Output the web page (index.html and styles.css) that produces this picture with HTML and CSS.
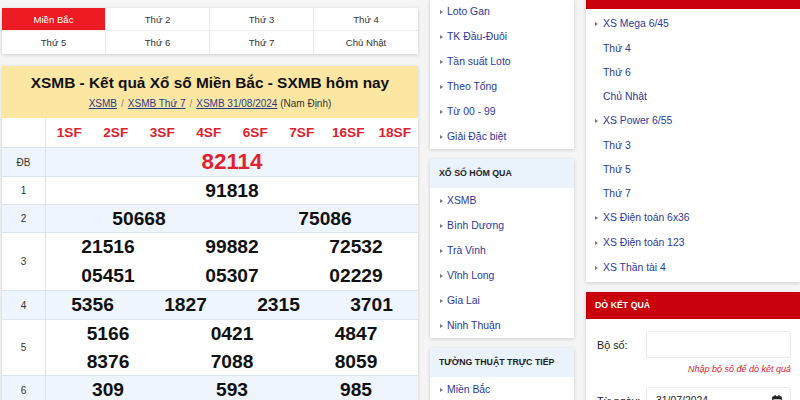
FILE: index.html
```html
<!DOCTYPE html>
<html lang="vi">
<head>
<meta charset="utf-8">
<title>XSMB</title>
<link rel="stylesheet" href="styles.css">
</head>
<body>
<div class="page">
  <div class="col-main">
    <div class="card tabs">
      <div class="tab active">Miền Bắc</div>
      <div class="tab">Thứ 2</div>
      <div class="tab">Thứ 3</div>
      <div class="tab">Thứ 4</div>
      <div class="tab last">Thứ 5</div>
      <div class="tab last">Thứ 6</div>
      <div class="tab last">Thứ 7</div>
      <div class="tab last">Chủ Nhật</div>
    </div>

    <div class="card result">
      <div class="result-head">
        <h1>XSMB - Kết quả Xổ số Miền Bắc - SXMB hôm nay</h1>
        <div class="crumbs"><a href="#">XSMB</a><span class="sep">/</span><a href="#">XSMB Thứ 7</a><span class="sep">/</span><a href="#">XSMB 31/08/2024</a> (Nam Định)</div>
      </div>
      <div class="row hrow">
        <div class="lbl"></div>
        <div class="vals c8">
          <div class="hd">1SF</div><div class="hd">2SF</div><div class="hd">3SF</div><div class="hd">4SF</div>
          <div class="hd">6SF</div><div class="hd">7SF</div><div class="hd">16SF</div><div class="hd">18SF</div>
        </div>
      </div>
      <div class="row alt l28">
        <div class="lbl">ĐB</div>
        <div class="vals c1"><div class="n db">82114</div></div>
      </div>
      <div class="row l27">
        <div class="lbl">1</div>
        <div class="vals c1"><div class="n">91818</div></div>
      </div>
      <div class="row alt l27">
        <div class="lbl">2</div>
        <div class="vals c2"><div class="n">50668</div><div class="n">75086</div></div>
      </div>
      <div class="row l285">
        <div class="lbl">3</div>
        <div class="vals c3">
          <div class="n">21516</div><div class="n">99882</div><div class="n">72532</div>
          <div class="n">05451</div><div class="n">05307</div><div class="n">02229</div>
        </div>
      </div>
      <div class="row alt l28">
        <div class="lbl">4</div>
        <div class="vals c4"><div class="n">5356</div><div class="n">1827</div><div class="n">2315</div><div class="n">3701</div></div>
      </div>
      <div class="row l275">
        <div class="lbl">5</div>
        <div class="vals c3">
          <div class="n">5166</div><div class="n">0421</div><div class="n">4847</div>
          <div class="n">8376</div><div class="n">7088</div><div class="n">8059</div>
        </div>
      </div>
      <div class="row alt l28">
        <div class="lbl">6</div>
        <div class="vals c3"><div class="n">309</div><div class="n">593</div><div class="n">985</div></div>
      </div>
    </div>
  </div>

  <div class="col-mid">
    <div class="card">
      <ul class="side-list">
        <li>Loto Gan</li>
        <li>TK Đầu-Đuôi</li>
        <li>Tần suất Loto</li>
        <li>Theo Tổng</li>
        <li>Từ 00 - 99</li>
        <li>Giải Đặc biệt</li>
      </ul>
    </div>
    <div class="card">
      <div class="mid-head">XỔ SỐ HÔM QUA</div>
      <ul class="side-list">
        <li>XSMB</li>
        <li>Bình Dương</li>
        <li>Trà Vinh</li>
        <li>Vĩnh Long</li>
        <li>Gia Lai</li>
        <li>Ninh Thuận</li>
      </ul>
    </div>
    <div class="card">
      <div class="mid-head">TƯỜNG THUẬT TRỰC TIẾP</div>
      <ul class="side-list">
        <li>Miền Bắc</li>
        <li>Miền Trung</li>
      </ul>
    </div>
  </div>

  <div class="col-right">
    <div class="card">
      <div class="red-head top">XỔ SỐ VIETLOTT</div>
      <ul class="r-list">
        <li class="grp">XS Mega 6/45</li>
        <li class="sub">Thứ 4</li>
        <li class="sub">Thứ 6</li>
        <li class="sub">Chủ Nhật</li>
        <li class="grp">XS Power 6/55</li>
        <li class="sub">Thứ 3</li>
        <li class="sub">Thứ 5</li>
        <li class="sub">Thứ 7</li>
        <li class="grp">XS Điện toán 6x36</li>
        <li class="grp">XS Điện toán 123</li>
        <li class="grp">XS Thần tài 4</li>
      </ul>
    </div>
    <div class="card">
      <div class="red-head">DÒ KẾT QUẢ</div>
      <div class="form">
        <div class="frow">
          <label class="flabel">Bộ số:</label>
          <div class="finput"></div>
        </div>
        <div class="hint">Nhập bộ số để dò kết quả</div>
        <div class="frow">
          <label class="flabel">Từ ngày:</label>
          <div class="finput date">
            <span>31/07/2024</span>
            <svg class="cal" width="10" height="11" viewBox="0 0 10 11"><rect x="0.75" y="1.75" width="8.5" height="8.5" rx="1" fill="none" stroke="#222" stroke-width="1.2"/><rect x="0.75" y="1.75" width="8.5" height="2.5" fill="#222"/><rect x="2.5" y="0" width="1.2" height="2.5" fill="#222"/><rect x="6.3" y="0" width="1.2" height="2.5" fill="#222"/></svg>
          </div>
        </div>
      </div>
    </div>
  </div>
</div>
</body>
</html>
```

FILE: styles.css
```css
* { box-sizing: border-box; }
html, body { margin: 0; padding: 0; }
body {
  width: 800px;
  height: 400px;
  overflow: hidden;
  background: #f5f5f5;
  font-family: "Liberation Sans", Arial, sans-serif;
}
.page {
  display: flex;
  align-items: flex-start;
  gap: 12px;
  padding-left: 2px;
  width: 820px;
}
.card {
  background: #fff;
  box-shadow: 0 1px 4px rgba(0, 0, 0, 0.16);
}

/* main column */
.col-main { width: 416px; flex: none; }
.tabs {
  margin-top: 8px;
  display: grid;
  grid-template-columns: repeat(4, 1fr);
}
.tab {
  height: 23px;
  line-height: 23px;
  text-align: center;
  font-size: 9.6px;
  color: #333;
  border-right: 1px solid #ececec;
  border-bottom: 1px solid #ececec;
}
.tab:nth-child(4n) { border-right: none; }
.tab.last { border-bottom: none; }
.tab.active { background: #ed1c24; color: #fff; }

.result { margin-top: 12px; }
.result-head {
  background: #fce7a2;
  height: 52px;
  padding-top: 6px;
  text-align: center;
}
.result-head h1 {
  margin: 0;
  font-size: 15.4px;
  line-height: 22px;
  font-weight: bold;
  color: #111;
}
.crumbs {
  font-size: 10px;
  line-height: 20px;
  color: #333;
}
.crumbs a { color: #2a3a8c; text-decoration: underline; }
.crumbs .sep { color: #888; margin: 0 4px; }

.row {
  display: flex;
  border-bottom: 1px solid #dde6f0;
}
.row.alt { background: #eef5fc; }
.lbl {
  width: 44px;
  flex: none;
  border-right: 1px solid #dde6f0;
  display: flex;
  align-items: center;
  justify-content: center;
  font-size: 10px;
  color: #333;
}
.vals { flex: 1; display: grid; }
.c1 { grid-template-columns: 1fr; }
.c2 { grid-template-columns: repeat(2, 1fr); }
.c3 { grid-template-columns: repeat(3, 1fr); }
.c4 { grid-template-columns: repeat(4, 1fr); }
.c8 { grid-template-columns: repeat(8, 1fr); }
.hd {
  text-align: center;
  color: #e0202a;
  font-size: 13.6px;
  font-weight: bold;
  line-height: 29px;
}
.n {
  text-align: center;
  font-size: 19.2px;
  font-weight: bold;
  color: #111;
}
.n.db { color: #e3212b; font-size: 22.4px; }
.l27 .n { line-height: 27px; }
.l275 .n { line-height: 27.5px; }
.l28 .n { line-height: 28px; }
.l285 .n { line-height: 28.5px; }

/* middle column */
.col-mid {
  width: 144px;
  flex: none;
  display: flex;
  flex-direction: column;
  gap: 10px;
  margin-top: -1px;
}
.side-list { list-style: none; margin: 0; padding: 0; }
.side-list li {
  height: 25px;
  display: flex;
  align-items: center;
  padding-left: 10px;
  font-size: 10.4px;
  color: #2a3a9c;
}
.side-list li::before,
.r-list li.grp::before {
  content: "";
  width: 0;
  height: 0;
  border-left: 3px solid #777;
  border-top: 2.5px solid transparent;
  border-bottom: 2.5px solid transparent;
  margin-right: 4px;
}
.mid-head {
  background: #eaf3fc;
  height: 29px;
  line-height: 29px;
  padding-left: 9px;
  font-size: 8.8px;
  font-weight: bold;
  color: #222;
}

/* right column */
.col-right {
  width: 214px;
  flex: none;
  display: flex;
  flex-direction: column;
  gap: 10px;
  margin-top: -18px;
}
.red-head {
  background: #c9000b;
  color: #fff;
  height: 27px;
  line-height: 27px;
  padding-left: 9px;
  font-size: 8.8px;
  font-weight: bold;
}
.red-head.top { line-height: 20px; }
.r-list { list-style: none; margin: 0; padding: 2px 0 2px; }
.r-list li {
  display: flex;
  align-items: center;
  font-size: 10.4px;
  color: #2a3a9c;
}
.r-list li.grp { height: 25px; padding-left: 9px; }
.r-list li.grp::before { margin-right: 5px; }
.r-list li.sub { height: 24px; padding-left: 17px; }

.form { padding: 12px 9px 12px 11px; }
.frow {
  display: grid;
  grid-template-columns: 49px 1fr;
  align-items: center;
}
.flabel { font-size: 10.8px; color: #222; }
.finput {
  height: 27px;
  border: 1px solid #ececec;
  border-radius: 2px;
  background: #fff;
}
.finput.date {
  display: flex;
  align-items: center;
  justify-content: space-between;
  padding: 0 8px 0 9px;
  font-size: 10.4px;
  color: #222;
}
.hint {
  margin: 4px 0 11px;
  line-height: 14px;
  text-align: right;
  font-size: 9px;
  font-style: italic;
  color: #e0202a;
}
```
